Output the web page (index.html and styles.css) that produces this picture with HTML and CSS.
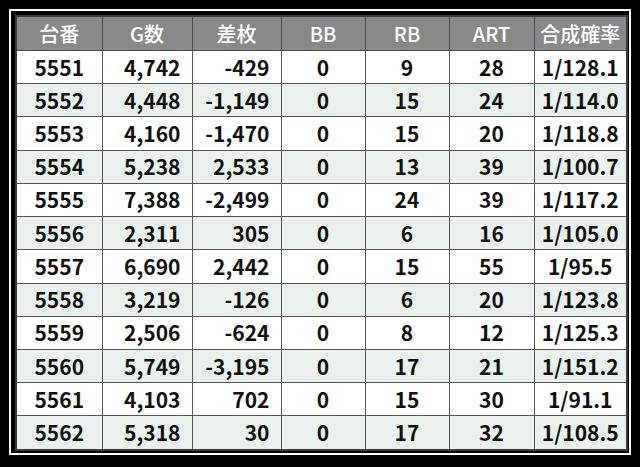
FILE: index.html
```html
<!DOCTYPE html>
<html lang="ja">
<head>
    <meta charset="UTF-8">
    <meta name="viewport" content="width=device-width, initial-scale=1.0">
    <title>データ一覧</title>
    <link rel="stylesheet" href="styles.css">
</head>
<body>

    <div class="frame">
        <table class="data-table">
            <colgroup>
                <col class="col-no">
                <col class="col-g">
                <col class="col-diff">
                <col class="col-bb">
                <col class="col-rb">
                <col class="col-art">
                <col class="col-rate">
            </colgroup>
            <thead>
                <tr>
                    <th>台番</th>
                    <th>G数</th>
                    <th>差枚</th>
                    <th>BB</th>
                    <th>RB</th>
                    <th>ART</th>
                    <th>合成確率</th>
                </tr>
            </thead>
            <tbody>
                <tr><td>5551</td><td class="num">4,742</td><td class="num">-429</td><td>0</td><td>9</td><td>28</td><td>1/128.1</td></tr>
                <tr><td>5552</td><td class="num">4,448</td><td class="num">-1,149</td><td>0</td><td>15</td><td>24</td><td>1/114.0</td></tr>
                <tr><td>5553</td><td class="num">4,160</td><td class="num">-1,470</td><td>0</td><td>15</td><td>20</td><td>1/118.8</td></tr>
                <tr><td>5554</td><td class="num">5,238</td><td class="num">2,533</td><td>0</td><td>13</td><td>39</td><td>1/100.7</td></tr>
                <tr><td>5555</td><td class="num">7,388</td><td class="num">-2,499</td><td>0</td><td>24</td><td>39</td><td>1/117.2</td></tr>
                <tr><td>5556</td><td class="num">2,311</td><td class="num">305</td><td>0</td><td>6</td><td>16</td><td>1/105.0</td></tr>
                <tr><td>5557</td><td class="num">6,690</td><td class="num">2,442</td><td>0</td><td>15</td><td>55</td><td>1/95.5</td></tr>
                <tr><td>5558</td><td class="num">3,219</td><td class="num">-126</td><td>0</td><td>6</td><td>20</td><td>1/123.8</td></tr>
                <tr><td>5559</td><td class="num">2,506</td><td class="num">-624</td><td>0</td><td>8</td><td>12</td><td>1/125.3</td></tr>
                <tr><td>5560</td><td class="num">5,749</td><td class="num">-3,195</td><td>0</td><td>17</td><td>21</td><td>1/151.2</td></tr>
                <tr><td>5561</td><td class="num">4,103</td><td class="num">702</td><td>0</td><td>15</td><td>30</td><td>1/91.1</td></tr>
                <tr><td>5562</td><td class="num">5,318</td><td class="num">30</td><td>0</td><td>17</td><td>32</td><td>1/108.5</td></tr>
            </tbody>
        </table>
    </div>

</body>
</html>
```

FILE: styles.css
```css
html, body {
    margin: 0;
    padding: 0;
    background-color: #000;
}
body {
    font-family: "Noto Sans CJK JP", "Noto Sans", sans-serif;
}
.frame {
    width: 611px;
    margin: 9px 0 0 9px;
    padding: 4px 3px 2px 4px;
    border: 2px solid #fff;
    background-color: #000;
}
.data-table {
    width: 611px;
    height: 436px;
    border-collapse: collapse;
    table-layout: fixed;
    border: 2px solid #3a3a3a;
}
.col-no { width: 86px; }
.col-g { width: 90px; }
.col-diff { width: 89px; }
.col-bb { width: 84px; }
.col-rb { width: 84px; }
.col-art { width: 85px; }
.col-rate { width: 93px; }

.data-table th {
    height: 33px;
    padding: 0;
    background-color: #898989;
    color: #fff;
    font-size: 20px;
    font-weight: 500;
    text-align: center;
    border: 1px solid #4a4a4a;
    line-height: 1;
}
.data-table td {
    padding: 0;
    background-color: #fff;
    color: #111;
    font-size: 21px;
    font-weight: 700;
    text-align: center;
    border: 1px solid #555;
    line-height: 1;
}
.data-table tbody tr:nth-child(even) td {
    background-color: #eaf1ec;
}
.data-table td.num {
    text-align: right;
    padding-right: 11px;
}
```
